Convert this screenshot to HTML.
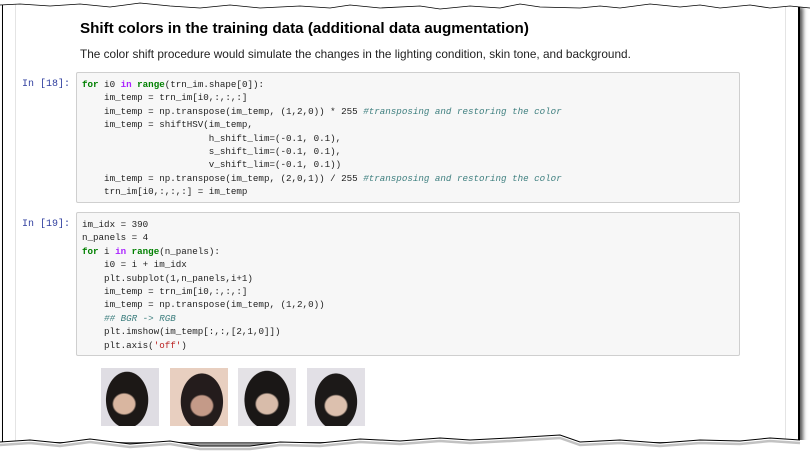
<!DOCTYPE html>
<html><head><style>
body{margin:0;width:810px;height:459px;background:#fff;position:relative;overflow:hidden;font-family:"Liberation Sans",sans-serif}
.page{position:absolute;left:2px;top:4px;width:795px;height:438px;border-left:1.5px solid #000;border-right:2px solid #000;box-shadow:3px 3px 4px #555;background:#fff}
.vl{position:absolute;top:0;bottom:0;width:1px;background:#e4e4e4}
h1{position:absolute;left:80px;top:20px;margin:0;font-size:15.2px;font-weight:bold;color:#000}
p{position:absolute;left:80px;top:47px;margin:0;font-size:11.8px;color:#222}
.pr{position:absolute;left:22px;font-family:"Liberation Mono",monospace;font-size:10px;color:#303F9F}
.cell{position:absolute;left:76px;width:664px;background:#f7f7f7;border:1px solid #cfcfcf;border-radius:2px;box-sizing:border-box}
pre{margin:0;padding:5px 0 0 5px;font-family:"Liberation Mono",monospace;font-size:9.2px;line-height:13.4px;color:#222}
.k{color:#008000;font-weight:bold}.o{color:#AA22FF;font-weight:bold}.c{color:#408080;font-style:italic}.s{color:#BA2121}.n{color:#222}
.im{position:absolute;top:368px;width:58px;height:58px}
</style></head><body>
<div class="page">
<div class="vl" style="left:12px"></div><div class="vl" style="left:782px"></div>
</div>
<svg style="position:absolute;left:0;top:0" width="810" height="12"><path d="M0 0H810V8L790 6 770 8 750 5 720 8 700 5 680 7 650 4 620 8 600 6 580 8 540 7 520 4 500 8 470 6 440 9 420 6 380 8 350 5 330 8 300 6 260 8 230 5 200 8 170 6 140 3 110 7 80 4 50 6 20 4 0 5Z" fill="#fff"/><path d="M810 8L790 6 770 8 750 5 720 8 700 5 680 7 650 4 620 8 600 6 580 8 540 7 520 4 500 8 470 6 440 9 420 6 380 8 350 5 330 8 300 6 260 8 230 5 200 8 170 6 140 3 110 7 80 4 50 6 20 4 0 5" fill="none" stroke="#000" stroke-width="0.8"/></svg>
<svg style="position:absolute;left:0;top:432" width="810" height="27"><path d="M0 10L30 8 60 11 90 7 130 12 170 9 200 14 250 14 280 10 320 11 360 7 400 9 440 6 470 8 510 6 560 3 580 10 620 8 660 11 700 8 740 9 770 6 800 8 810 8V27H0Z" fill="#fff"/><path d="M0 13L30 11 60 14 90 10 130 15 170 12 200 17 250 17 280 13 320 14 360 10 400 12 440 9 470 11 510 9 560 6 580 13 620 11 660 14 700 11 740 12 770 9 800 11" fill="none" stroke="#999" stroke-width="2.5" opacity=".6"/><path d="M0 10L30 8 60 11 90 7 130 12 170 9 200 14 250 14 280 10 320 11 360 7 400 9 440 6 470 8 510 6 560 3 580 10 620 8 660 11 700 8 740 9 770 6 800 8" fill="none" stroke="#000" stroke-width="1"/></svg>
<h1>Shift colors in the training data (additional data augmentation)</h1>
<p>The color shift procedure would simulate the changes in the lighting condition, skin tone, and background.</p>
<div class="pr" style="top:79px">In [18]:</div>
<div class="cell" style="top:72px;height:131px"><pre><span class="k">for</span> i0 <span class="o">in</span> <span class="k">range</span>(trn_im.shape[<span class="n">0</span>]):
    im_temp = trn_im[i0,:,:,:]
    im_temp = np.transpose(im_temp, (<span class="n">1</span>,<span class="n">2</span>,<span class="n">0</span>)) * <span class="n">255</span> <span class="c">#transposing and restoring the color</span>
    im_temp = shiftHSV(im_temp,
                       h_shift_lim=(-<span class="n">0.1</span>, <span class="n">0.1</span>),
                       s_shift_lim=(-<span class="n">0.1</span>, <span class="n">0.1</span>),
                       v_shift_lim=(-<span class="n">0.1</span>, <span class="n">0.1</span>))
    im_temp = np.transpose(im_temp, (<span class="n">2</span>,<span class="n">0</span>,<span class="n">1</span>)) / <span class="n">255</span> <span class="c">#transposing and restoring the color</span>
    trn_im[i0,:,:,:] = im_temp</pre></div>
<div class="pr" style="top:219px">In [19]:</div>
<div class="cell" style="top:212px;height:144px"><pre>im_idx = <span class="n">390</span>
n_panels = <span class="n">4</span>
<span class="k">for</span> i <span class="o">in</span> <span class="k">range</span>(n_panels):
    i0 = i + im_idx
    plt.subplot(<span class="n">1</span>,n_panels,i+<span class="n">1</span>)
    im_temp = trn_im[i0,:,:,:]
    im_temp = np.transpose(im_temp, (<span class="n">1</span>,<span class="n">2</span>,<span class="n">0</span>))
    <span class="c">## BGR -&gt; RGB</span>
    plt.imshow(im_temp[:,:,[<span class="n">2</span>,<span class="n">1</span>,<span class="n">0</span>]])
    plt.axis(<span class="s">'off'</span>)</pre></div>
<div class="im" style="left:101px;background:radial-gradient(ellipse 30% 28% at 40% 62%,#d9b6a0 60%,transparent 70%),radial-gradient(ellipse 45% 60% at 45% 55%,#1c1816 80%,transparent 82%),#dfdde3"></div>
<div class="im" style="left:170px;background:radial-gradient(ellipse 30% 28% at 55% 65%,#c49a88 60%,transparent 70%),radial-gradient(ellipse 45% 60% at 55% 58%,#241c1c 80%,transparent 82%),#e8cfc0"></div>
<div class="im" style="left:238px;background:radial-gradient(ellipse 30% 28% at 50% 62%,#d8bcaa 60%,transparent 70%),radial-gradient(ellipse 48% 62% at 50% 55%,#1a1716 80%,transparent 82%),#e4e2e6"></div>
<div class="im" style="left:307px;background:radial-gradient(ellipse 30% 28% at 50% 65%,#dcc0ae 60%,transparent 70%),radial-gradient(ellipse 45% 60% at 50% 58%,#1c1918 80%,transparent 82%),#e2e0e6"></div>
</body></html>
